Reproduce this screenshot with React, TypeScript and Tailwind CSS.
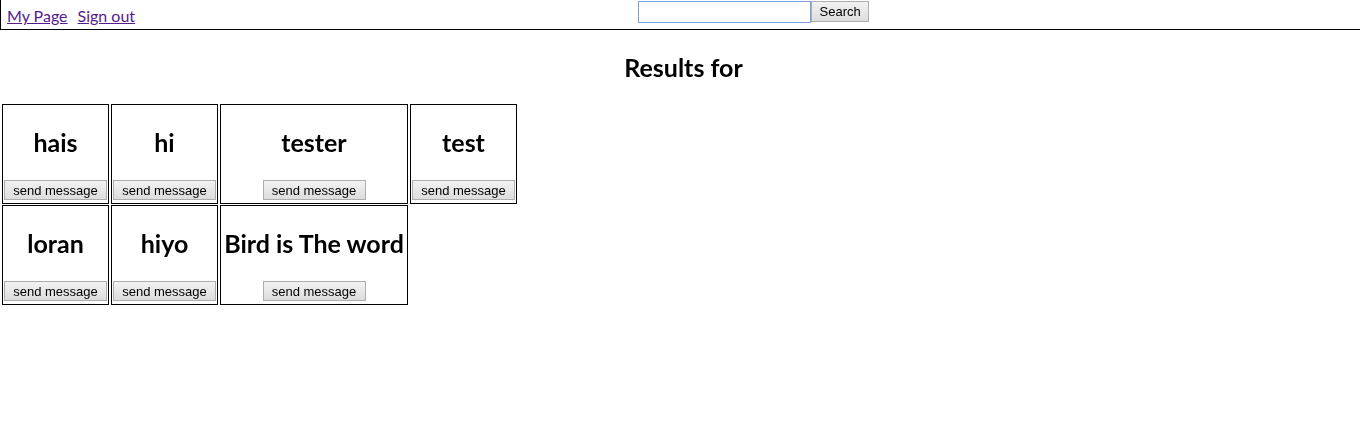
import React from "react";

const results = [
  ["hais", "hi", "tester", "test"],
  ["loran", "hiyo", "Bird is The word"],
];

function ResultCard({ name }: { name: string }) {
  return (
    <div className="flex flex-col items-center border border-black p-[1px] pb-[3px] h-[100px]">
      <div className="h-[74px] flex items-center justify-center whitespace-nowrap text-[25px] font-bold text-black">
        {name}
      </div>
      <button
        type="button"
        className="h-[20px] w-[103px] border border-[#adadad] bg-gradient-to-b from-[#f2f2f2] to-[#dddddd] text-[13px] text-black leading-none font-['Liberation_Sans',Arial,sans-serif]"
      >
        send message
      </button>
    </div>
  );
}

export default function App() {
  return (
    <div className="min-h-[431px] bg-white font-['Lato','Noto_Sans',sans-serif] text-black">
      <div className="h-[30px] border-l border-b border-black flex items-start">
        <div className="pl-[6px] pt-[5px] flex gap-[10px] text-[16px] leading-[21px]">
          <a href="#" className="text-[#551a8b] underline">
            My Page
          </a>
          <a href="#" className="text-[#551a8b] underline">
            Sign out
          </a>
        </div>
        <form className="flex items-start pt-[1px] ml-[503px]">
          <input
            className="w-[173px] h-[22px] border border-[#7ba2dc] outline-none px-[2px] text-[13px]"
            autoFocus
          />
          <button
            type="button"
            className="w-[58px] h-[21px] border border-[#adadad] bg-gradient-to-b from-[#f2f2f2] to-[#dddddd] text-[13px] leading-none font-['Liberation_Sans',Arial,sans-serif]"
          >
            Search
          </button>
        </form>
      </div>

      <h2 className="pt-[22px] pb-[22px] text-center text-[25px] font-bold leading-[30px] pl-[7px]">
        Results for
      </h2>

      <div className="flex flex-col gap-[1px] pl-[2px]">
        {results.map((row, i) => (
          <div key={i} className="grid grid-cols-[107px_107px_188px_107px] gap-x-[2px] w-fit">
            {row.map((name) => (
              <ResultCard key={name} name={name} />
            ))}
          </div>
        ))}
      </div>
    </div>
  );
}
